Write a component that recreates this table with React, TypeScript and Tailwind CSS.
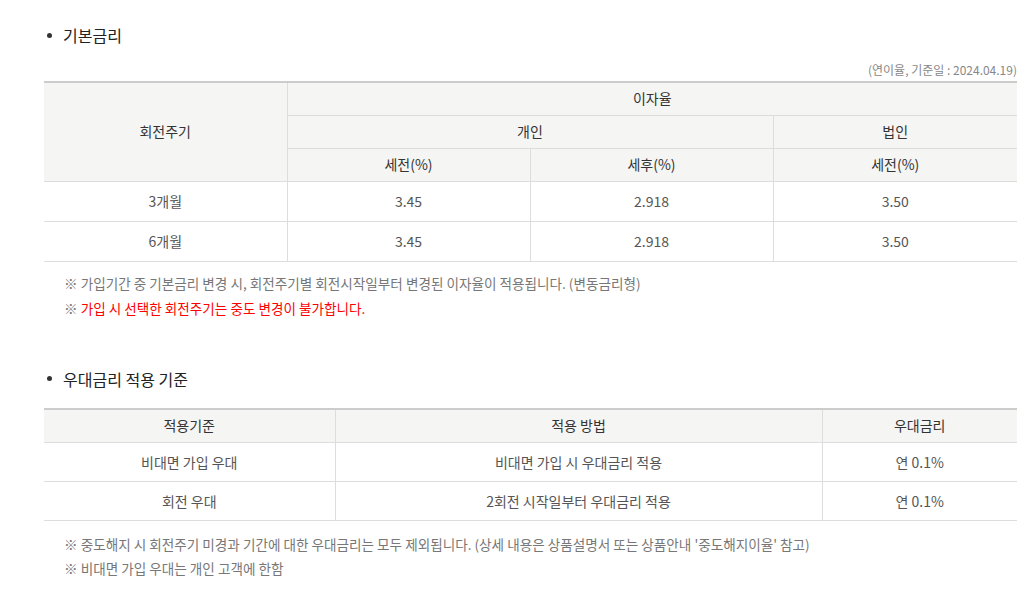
import React from "react";

const font = { fontFamily: '"Noto Sans CJK KR", "Noto Sans", sans-serif' };

function Title({ children }: { children: React.ReactNode }) {
  return (
    <div className="flex items-center h-[24px] text-[16px] text-[#222] leading-none">
      <span className="w-[5px] h-[5px] rounded-full bg-[#333] ml-[3px] mr-[11px]" />
      <span>{children}</span>
    </div>
  );
}

const th = "bg-[#f5f5f4] text-[#333] font-normal text-[14px] text-center border border-[#dddddd] p-0";
const td = "text-[#555] text-[14px] text-center border border-[#dddddd] p-0";

export default function App() {
  return (
    <div className="bg-white w-[1035px] h-[595px] overflow-hidden pl-[44px] pt-[23px]" style={font}>
      <div className="w-[973px]">
        <Title>기본금리</Title>
        <div className="text-right text-[12px] text-[#888] mt-[15px] h-[16px] leading-[16px]">
          (연이율, 기준일 : 2024.04.19)
        </div>
        <table className="w-[973px] border-collapse table-fixed mt-[3px] border-t-2 border-t-[#cccccc]">
          <colgroup>
            <col className="w-[243px]" />
            <col className="w-[243px]" />
            <col className="w-[243px]" />
            <col className="w-[244px]" />
          </colgroup>
          <thead>
            <tr className="h-[33px]">
              <th rowSpan={3} className={th + " border-l-0 border-t-0"}>회전주기</th>
              <th colSpan={3} className={th + " border-r-0 border-t-0"}>이자율</th>
            </tr>
            <tr className="h-[33px]">
              <th colSpan={2} className={th}>개인</th>
              <th className={th + " border-r-0"}>법인</th>
            </tr>
            <tr className="h-[33px]">
              <th className={th}>세전(%)</th>
              <th className={th}>세후(%)</th>
              <th className={th + " border-r-0"}>세전(%)</th>
            </tr>
          </thead>
          <tbody>
            {["3개월", "6개월"].map((p) => (
              <tr key={p} className="h-[40px]">
                <td className={td + " border-l-0"}>{p}</td>
                <td className={td}>3.45</td>
                <td className={td}>2.918</td>
                <td className={td + " border-r-0"}>3.50</td>
              </tr>
            ))}
          </tbody>
        </table>
        <div className="pl-[20px] mt-[9px] text-[13.6px] leading-[25px]">
          <div className="text-[#777]">※ 가입기간 중 기본금리 변경 시, 회전주기별 회전시작일부터 변경된 이자율이 적용됩니다. (변동금리형)</div>
          <div className="text-[#ff0000]"><span className="text-[#777]">※</span> 가입 시 선택한 회전주기는 중도 변경이 불가합니다.</div>
        </div>

        <div className="mt-[46px]">
          <Title>우대금리 적용 기준</Title>
        </div>
        <table className="w-[973px] border-collapse table-fixed mt-[17px] border-t-2 border-t-[#cccccc]">
          <colgroup>
            <col className="w-[291px]" />
            <col className="w-[487px]" />
            <col className="w-[195px]" />
          </colgroup>
          <thead>
            <tr className="h-[34px]">
              <th className={th + " border-l-0 border-t-0"}>적용기준</th>
              <th className={th + " border-t-0"}>적용 방법</th>
              <th className={th + " border-r-0 border-t-0"}>우대금리</th>
            </tr>
          </thead>
          <tbody>
            <tr className="h-[39px]">
              <td className={td + " border-l-0"}>비대면 가입 우대</td>
              <td className={td}>비대면 가입 시 우대금리 적용</td>
              <td className={td + " border-r-0"}>연 0.1%</td>
            </tr>
            <tr className="h-[39px]">
              <td className={td + " border-l-0"}>회전 우대</td>
              <td className={td}>2회전 시작일부터 우대금리 적용</td>
              <td className={td + " border-r-0"}>연 0.1%</td>
            </tr>
          </tbody>
        </table>
        <div className="pl-[20px] mt-[11px] text-[13.6px] leading-[24px] text-[#777]">
          <div>※ 중도해지 시 회전주기 미경과 기간에 대한 우대금리는 모두 제외됩니다. (상세 내용은 상품설명서 또는 상품안내 '중도해지이율' 참고)</div>
          <div>※ 비대면 가입 우대는 개인 고객에 한함</div>
        </div>
      </div>
    </div>
  );
}
